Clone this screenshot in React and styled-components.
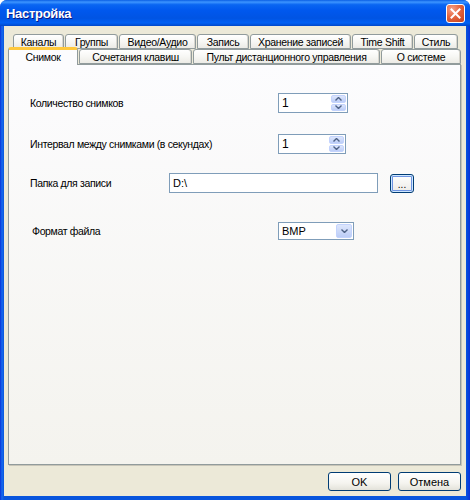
import React from "react";
import styled, { createGlobalStyle } from "styled-components";

const GlobalStyle = createGlobalStyle`
  html, body {
    margin: 0;
    padding: 0;
    background: #ffffff;
  }
  body {
    font-family: "Liberation Sans", Arial, sans-serif;
    font-size: 11px;
    color: #000;
  }
`;

const topTabs = [
  { title: "Каналы", width: 51 },
  { title: "Группы", width: 53 },
  { title: "Видео/Аудио", width: 77 },
  { title: "Запись", width: 52 },
  { title: "Хранение записей", width: 101 },
  { title: "Time Shift", width: 61 },
  { title: "Стиль", width: 44 },
];

const bottomTabs = [
  { title: "Снимок", width: 70, active: true },
  { title: "Сочетания клавиш", width: 113 },
  { title: "Пульт дистанционного управления", width: 187 },
  { title: "О системе", width: 80 },
];

const Chevron = ({ down }) => (
  <svg width="7" height="4" viewBox="0 0 7 4">
    <path
      d={down ? "M0.5 0.5 L3.5 3.5 L6.5 0.5" : "M0.5 3.5 L3.5 0.5 L6.5 3.5"}
      fill="none"
      stroke="#4d6185"
      strokeWidth="1.4"
    />
  </svg>
);

const SpinBox = ({ value, width }) => (
  <SpinField $width={width}>
    <span>{value}</span>
    <SpinButtons>
      <SpinButton>
        <Chevron />
      </SpinButton>
      <SpinButton>
        <Chevron down />
      </SpinButton>
    </SpinButtons>
  </SpinField>
);

const App = () => {
  return (
    <>
      <GlobalStyle />
      <StyledWindow>
        <TitleBar>
          <span className="title">Настройка</span>
          <CloseButton>
            <svg width="11" height="11" viewBox="0 0 11 11">
              <path
                d="M1.5 1.5 L9.5 9.5 M9.5 1.5 L1.5 9.5"
                stroke="#fff"
                strokeWidth="2"
                strokeLinecap="square"
              />
            </svg>
          </CloseButton>
        </TitleBar>
        <Body>
          <TabStrip>
            <TabRow $offset={5}>
              {topTabs.map((tab) => (
                <Tab key={tab.title} $width={tab.width}>
                  {tab.title}
                </Tab>
              ))}
            </TabRow>
            <TabRow $offset={0} $front>
              {bottomTabs.map((tab) => (
                <Tab key={tab.title} $width={tab.width} $active={tab.active}>
                  {tab.title}
                </Tab>
              ))}
            </TabRow>
          </TabStrip>
          <Panel>
            <Row $top={28} $height={20}>
              <Label $width={248}>Количество снимков</Label>
              <SpinBox value="1" width={70} />
            </Row>
            <Row $top={21} $height={20}>
              <Label $width={248}>Интервал между снимками (в секундах)</Label>
              <SpinBox value="1" width={68} />
            </Row>
            <Row $top={19} $height={20}>
              <Label $width={139}>Папка для записи</Label>
              <TextField $width={209}>D:\</TextField>
              <BrowseButton>...</BrowseButton>
            </Row>
            <Row $top={29} $height={18}>
              <Label $width={246} $indent={2}>
                Формат файла
              </Label>
              <Select $width={76}>
                <span>BMP</span>
                <SelectButton>
                  <Chevron down />
                </SelectButton>
              </Select>
            </Row>
          </Panel>
          <Footer>
            <PushButton>OK</PushButton>
            <PushButton>Отмена</PushButton>
          </Footer>
        </Body>
      </StyledWindow>
    </>
  );
};

export default App;

const StyledWindow = styled.div`
  width: 470px;
  height: 500px;
  display: flex;
  flex-direction: column;
  background: linear-gradient(to right, #0831d9, #166aee 2px, #0855dd 4px, #0855dd 466px, #0831d9);
  border-radius: 7px 7px 0 0;
  overflow: hidden;
`;

const TitleBar = styled.div`
  height: 26px;
  flex-shrink: 0;
  display: flex;
  align-items: center;
  justify-content: space-between;
  padding: 0 5px 0 6px;
  background: linear-gradient(
    to bottom,
    #0a5fe4 0%,
    #3d95ff 8%,
    #0a66f2 18%,
    #0058ee 40%,
    #0054e3 70%,
    #0060f4 88%,
    #0047c8 100%
  );

  .title {
    color: #fff;
    font-family: "Liberation Sans", Arial, sans-serif;
    font-weight: 700;
    font-size: 13px;
    text-shadow: 1px 1px 0 #0a1883;
    letter-spacing: -0.3px;
  }
`;

const CloseButton = styled.div`
  width: 19px;
  height: 19px;
  box-sizing: border-box;
  border: 1px solid #fff;
  border-radius: 3px;
  display: flex;
  align-items: center;
  justify-content: center;
  background: radial-gradient(circle at 30% 25%, #f4a18a 0%, #e5663f 45%, #c4401d 100%);
`;

const Body = styled.div`
  flex: 1;
  margin: 0 4px 4px 4px;
  background: #ece9d8;
  padding: 7px 5px 0 4px;
  display: flex;
  flex-direction: column;
`;

const TabStrip = styled.div`
  display: flex;
  flex-direction: column;
  height: 31px;
  position: relative;
  z-index: 1;
`;

const TabRow = styled.div`
  display: flex;
  align-items: flex-end;
  gap: 1px;
  padding-left: ${(p) => p.$offset}px;
  margin-top: ${(p) => (p.$front ? "-3px" : "0")};
  margin-bottom: ${(p) => (p.$front ? "-1px" : "0")};
  height: ${(p) => (p.$front ? "18px" : "17px")};
`;

const Tab = styled.div`
  box-sizing: border-box;
  width: ${(p) => p.$width}px;
  height: ${(p) => (p.$active ? "18px" : "15px")};
  margin-bottom: ${(p) => (p.$active ? "0" : "1px")};
  border: 1px solid #919b9c;
  border-bottom: ${(p) => (p.$active ? "none" : "1px solid #919b9c")};
  border-top: ${(p) => (p.$active ? "3px solid #ffc83c" : "1px solid #919b9c")};
  border-radius: 3px 3px 0 0;
  display: flex;
  align-items: center;
  justify-content: center;
  white-space: nowrap;
  font-size: 10.5px;
  letter-spacing: -0.3px;
  padding-bottom: ${(p) => (p.$active ? "2px" : "0")};
  background: ${(p) =>
    p.$active
      ? "#fcfcfe"
      : "linear-gradient(to bottom, #ffffff 0%, #f7f7f4 50%, #ecebe6 100%)"};
  box-shadow: ${(p) => (p.$active ? "none" : "inset -1px 0 0 #d8d6ce")};
`;

const Panel = styled.div`
  box-sizing: border-box;
  width: 453px;
  height: 401px;
  border: 1px solid #919b9c;
  box-shadow: 1px 1px 0 #c8c5b8;
  background: linear-gradient(to bottom, #fcfcfe, #f4f3ee);
  padding-left: 21px;
  display: flex;
  flex-direction: column;
`;

const Row = styled.div`
  display: flex;
  align-items: center;
  height: ${(p) => p.$height}px;
  margin-top: ${(p) => p.$top}px;
`;

const Label = styled.div`
  width: ${(p) => p.$width}px;
  padding-left: ${(p) => p.$indent || 0}px;
  white-space: nowrap;
  letter-spacing: -0.35px;
  font-size: 10.5px;
`;

const SpinField = styled.div`
  box-sizing: border-box;
  width: ${(p) => p.$width}px;
  height: 20px;
  border: 1px solid #7f9db9;
  background: #fff;
  display: flex;
  align-items: center;
  justify-content: space-between;
  padding: 1px 1px 1px 3px;
  font-size: 12px;
`;

const SpinButtons = styled.div`
  display: flex;
  flex-direction: column;
  height: 100%;
  width: 15px;
  gap: 1px;
`;

const SpinButton = styled.div`
  flex: 1;
  border-radius: 2px;
  background: linear-gradient(to bottom, #dde6fc, #bccdf7);
  border: 1px solid #c3d3fd;
  box-sizing: border-box;
  display: flex;
  align-items: center;
  justify-content: center;
`;

const TextField = styled.div`
  box-sizing: border-box;
  width: ${(p) => p.$width}px;
  height: 20px;
  border: 1px solid #7f9db9;
  background: #fff;
  padding: 2px 3px;
  font-size: 11px;
  display: flex;
  align-items: center;
`;

const BrowseButton = styled.div`
  box-sizing: border-box;
  width: 24px;
  height: 19px;
  margin-left: 12px;
  border: 1px solid #003c74;
  border-radius: 3px;
  background: linear-gradient(to bottom, #ffffff, #ecebe6);
  box-shadow: inset 0 0 0 1px #cee7ff, inset 0 0 0 2px #6f94e1;
  display: flex;
  align-items: flex-end;
  justify-content: center;
  padding-bottom: 3px;
  font-size: 10px;
  line-height: 8px;
`;

const Select = styled.div`
  box-sizing: border-box;
  width: ${(p) => p.$width}px;
  height: 18px;
  border: 1px solid #7f9db9;
  background: #fff;
  display: flex;
  align-items: center;
  justify-content: space-between;
  padding: 1px 1px 1px 3px;
  font-size: 11px;
`;

const SelectButton = styled.div`
  box-sizing: border-box;
  width: 16px;
  height: 100%;
  border-radius: 2px;
  border: 1px solid #c3d3fd;
  background: linear-gradient(to bottom, #dde6fc, #bccdf7);
  display: flex;
  align-items: center;
  justify-content: center;
`;

const Footer = styled.div`
  display: flex;
  justify-content: flex-end;
  gap: 7px;
  margin-top: 7px;
`;

const PushButton = styled.div`
  box-sizing: border-box;
  width: 63px;
  height: 19px;
  border: 1px solid #003c74;
  border-radius: 3px;
  background: linear-gradient(to bottom, #ffffff 0%, #f5f4ef 60%, #e3e2da 100%);
  display: flex;
  align-items: center;
  justify-content: center;
  font-size: 11px;
`;
